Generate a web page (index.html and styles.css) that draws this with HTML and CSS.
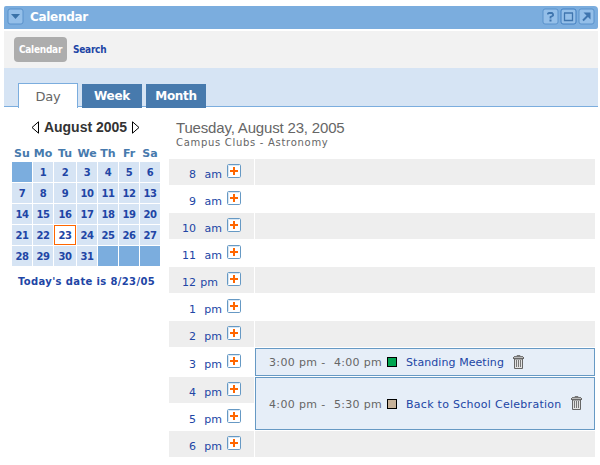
FILE: index.html
```html
<!DOCTYPE html>
<html lang="en">
<head>
<meta charset="utf-8">
<title>Calendar</title>
<link rel="stylesheet" href="styles.css">
</head>
<body>
<svg class="defs" aria-hidden="true">
  <symbol id="plus" viewBox="0 0 14 14">
    <rect x=".5" y=".5" width="13" height="13" rx="1.2" fill="#fff" stroke="#6699c4"/>
    <path d="M1.5 12V1.5H12" fill="none" stroke="#d8e6f2"/>
    <path d="M3 6h8v2H3zM6 3h2v8H6z" fill="#f60"/>
  </symbol>
  <symbol id="trash" viewBox="0 0 11 14">
    <path d="M4 1.5V.5h3v1M1 1.5h9" fill="none" stroke="#777"/>
    <path d="M0 2h11v2H0z" fill="#666"/>
    <path d="M1 2.5h9" stroke="#bbb"/>
    <path d="M1.5 4v9.5h8V4z" fill="#e2e2e2" stroke="#666"/>
    <path d="M3.5 5v7M5.5 5v7M7.5 5v7" stroke="#777"/>
  </symbol>
</svg>
<div class="portlet">
  <header class="titlebar">
    <svg class="tool" viewBox="0 0 17 17"><rect class="face" x="1" y="1" width="15" height="15" rx="2"/><path d="M4 6h9L8.5 11z" fill="#3a72a8"/></svg>
    <h1>Calendar</h1>
    <div class="tools">
      <svg class="tool" viewBox="0 0 17 17"><rect class="face" x="1" y="1" width="15" height="15" rx="2"/><path d="M6 6.5V5.5L7 5h3l1 1v1.5L8.5 9v1.5M7.5 12.5h2" fill="none" stroke="#3f75ae" stroke-width="1.8"/></svg>
      <svg class="tool" viewBox="0 0 17 17"><rect class="face dark" x="1" y="1" width="15" height="15" rx="2"/><path d="M4.5 5v7.500h8V5M4 5h9" fill="none" stroke="#3f75ae" stroke-width="1.3"/></svg>
      <svg class="tool" viewBox="0 0 17 17"><rect class="face" x="1" y="1" width="15" height="15" rx="2"/><path d="M5 12.500L11 6.500" stroke="#3f75ae" stroke-width="2"/><path d="M5.500 4.500H12.500V11.500z" fill="#3f75ae"/></svg>
    </div>
  </header>
  <nav class="subnav"><span class="pill">Calendar</span><a class="search">Search</a></nav>
  <nav class="tabs"><a class="tab active"><span>Day</span></a><a class="tab">Week</a><a class="tab">Month</a></nav>
  <main class="content">
    <aside class="side">
      <div class="month">
        <svg width="8" height="13" viewBox="0 0 8 13"><path d="M7.500 .8v11.400L1 6.500z" fill="#fff" stroke="#000"/></svg>
        <h2>August 2005</h2>
        <svg width="8" height="13" viewBox="0 0 8 13"><path d="M.5 .8v11.400L7 6.500z" fill="#fff" stroke="#000"/></svg>
      </div>
      <div class="grid heads"><span>Su</span><span>Mo</span><span>Tu</span><span>We</span><span>Th</span><span>Fr</span><span>Sa</span></div>
      <div class="grid days">
        <span class="blank"></span><span>1</span><span>2</span><span>3</span><span>4</span><span>5</span><span>6</span>
        <span>7</span><span>8</span><span>9</span><span>10</span><span>11</span><span>12</span><span>13</span>
        <span>14</span><span>15</span><span>16</span><span>17</span><span>18</span><span>19</span><span>20</span>
        <span>21</span><span>22</span><span class="today">23</span><span>24</span><span>25</span><span>26</span><span>27</span>
        <span>28</span><span>29</span><span>30</span><span>31</span><span class="blank"></span><span class="blank"></span><span class="blank"></span>
      </div>
      <p class="note">Today's date is 8/23/05</p>
    </aside>
    <section class="day">
      <h2 class="date">Tuesday, August 23, 2005</h2>
      <p class="club">Campus Clubs - Astronomy</p>
      <div class="schedule">
        <div class="hour shade"><b>8</b><i>am</i><svg><use href="#plus"/></svg></div><div class="slot shade"></div>
        <div class="hour"><b>9</b><i>am</i><svg><use href="#plus"/></svg></div><div class="slot"></div>
        <div class="hour shade"><b>10</b><i>am</i><svg><use href="#plus"/></svg></div><div class="slot shade"></div>
        <div class="hour"><b>11</b><i>am</i><svg><use href="#plus"/></svg></div><div class="slot"></div>
        <div class="hour shade noon"><b>12</b><i>pm</i><svg><use href="#plus"/></svg></div><div class="slot shade"></div>
        <div class="hour"><b>1</b><i>pm</i><svg><use href="#plus"/></svg></div><div class="slot"></div>
        <div class="hour shade"><b>2</b><i>pm</i><svg><use href="#plus"/></svg></div><div class="slot shade"></div>
        <div class="hour three"><b>3</b><i>pm</i><svg><use href="#plus"/></svg></div>
        <div class="event"><span class="from">3:00 pm -</span><span class="to">4:00 pm</span><span class="swatch green"></span><a class="name meeting">Standing Meeting</a><svg class="trash"><use href="#trash"/></svg></div>
        <div class="hour shade"><b>4</b><i>pm</i><svg><use href="#plus"/></svg></div>
        <div class="event tall"><span class="from">4:00 pm -</span><span class="to">5:30 pm</span><span class="swatch tan"></span><a class="name party">Back to School Celebration</a><svg class="trash"><use href="#trash"/></svg></div>
        <div class="hour"><b>5</b><i>pm</i><svg><use href="#plus"/></svg></div>
        <div class="hour shade"><b>6</b><i>pm</i><svg><use href="#plus"/></svg></div><div class="slot shade"></div>
      </div>
    </section>
  </main>
</div>
</body>
</html>
```
FILE: styles.css
```css
* { box-sizing: border-box; }
body { margin: 0; background: #fff; font-family: "DejaVu Sans", Verdana, sans-serif; font-size: 11px; color: #666; overflow: hidden; }
h1, h2, p { margin: 0; white-space: nowrap; }
svg { display: block; flex: none; }
.defs { width: 0; height: 0; position: absolute; }
.portlet { width: 594px; margin: 6px 0 0 4px; }
.titlebar { height: 23px; background: #7badde; display: flex; align-items: center; padding: 0 3px 2px; border-radius: 2px 4px 2px 0; }
.titlebar h1 { color: #fff; font-size: 12px; line-height: 21px; padding-top: 1px; margin-left: 6px; letter-spacing: -.3px; }
.tools { display: flex; gap: 1px; margin-left: auto; }
.tool { width: 17px; height: 17px; }
.face { fill: #94bfe9; stroke: #5a92cb; }
.face.dark { stroke: #427fc0; }
.subnav { margin-top: 2px; height: 37px; background: #f2f2f2; display: flex; align-items: center; padding: 0 0 0 10px; font: bold 10px/24px "DejaVu Sans Condensed", "DejaVu Sans", sans-serif; letter-spacing: -.25px; }
.pill { width: 53px; height: 25px; background: #adadad; border-radius: 4px; color: #fff; text-align: center; line-height: 25px; }
.search { color: #2145a5; margin-left: 6px; }
.tabs { height: 39px; background: #d6e4f4; border-bottom: 1px solid #7badde; display: flex; gap: 4px; padding: 15px 0 0 14px; }
.tab { width: 60px; height: 24px; margin-top: 1px; background: #477aad; color: #fff; font-size: 12px; font-weight: bold; line-height: 25px; text-align: center; letter-spacing: -.3px; }
.tab.active { height: 25px; margin-top: 0; background: #fff; color: #666; font-size: 13px; font-weight: normal; border: 1px solid #7badde; border-bottom: 0; }
.content { display: flex; align-items: flex-start; }
.side { width: 149px; margin-left: 8px; padding-top: 12px; }
.month { display: flex; justify-content: center; align-items: center; gap: 5px; height: 16px; margin-right: 2px; }
.month h2 { font: bold 14px/16px "Liberation Sans", Arial, sans-serif; color: #333; }
.grid { display: grid; grid-template-columns: 20px 20px 22px repeat(4, 20px); gap: 1px; text-align: center; font-weight: bold; }
.heads { color: #477aad; height: 27px; line-height: 37px; font-size: 11px; }
.heads span { margin: 0 -3px; }
.days { grid-auto-rows: 20px; font-size: 10px; line-height: 21px; color: #2145a5; }
.days span { background: #d6e4f4; letter-spacing: -.4px; }
.days .blank { background: #7badde; }
.days .today { background: #fff; border: 1px solid #f60; line-height: 19px; }
.note { margin-top: 8px; color: #2145a5; font-weight: bold; font-size: 10px; line-height: 16px; text-align: center; letter-spacing: .36px; }
.day { margin-left: 8px; width: 426px; }
.date { margin: 12px 0 0 7px; font: 15px/18px "Liberation Sans", Arial, sans-serif; letter-spacing: -.17px; }
.club { margin-left: 7px; font-size: 10px; line-height: 12px; letter-spacing: .7px; }
.schedule { margin-top: 10px; display: grid; grid-template-columns: 85px 340px; column-gap: 1px; row-gap: 1px; grid-template-rows: repeat(7, 26px) 28px repeat(3, 26px); }
.shade { background: #eee; }
.hour { display: flex; color: #2145a5; padding: 5px 0 0; }
.hour.three { padding-top: 6px; }
.hour b { font-weight: normal; width: 27px; text-align: right; line-height: 22px; }
.hour i { font-style: normal; width: 26px; text-align: right; line-height: 22px; }
.hour svg { width: 14px; height: 14px; margin-left: 5px; }
.noon i { width: 22px; }
.noon svg { margin-left: 9px; }
.event { background: #e6eef8; border: 1px solid #6699c4; display: flex; align-items: center; padding: 1px 0 0 13px; white-space: nowrap; }
.tall { grid-row: span 2; }
.from { width: 65px; letter-spacing: .35px; }
.to { width: 53px; letter-spacing: .3px; }
.swatch { width: 10px; height: 10px; border: 1px solid #000; margin: -1px 9px 0 0; }
.green { background: #00a651; }
.tan { background: #c7b299; }
.name { color: #2145a5; }
.meeting { letter-spacing: .07px; }
.party { letter-spacing: .28px; }
.trash { width: 11px; height: 14px; margin: -2px 0 0 9px; }
```
